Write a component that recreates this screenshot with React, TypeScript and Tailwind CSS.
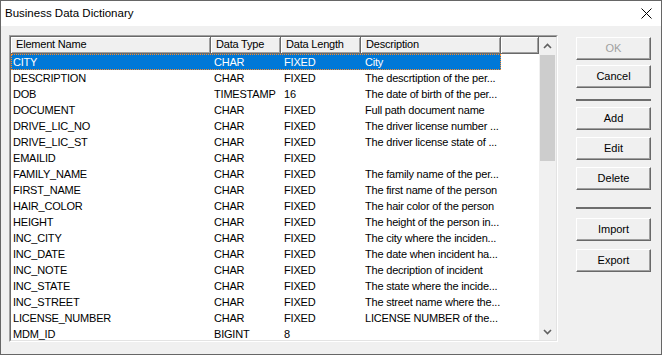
import React from 'react';

const rows = [
  ['CITY', 'CHAR', 'FIXED', 'City'],
  ['DESCRIPTION', 'CHAR', 'FIXED', 'The descrtiption of the per...'],
  ['DOB', 'TIMESTAMP', '16', 'The date of birth of the per...'],
  ['DOCUMENT', 'CHAR', 'FIXED', 'Full path document name'],
  ['DRIVE_LIC_NO', 'CHAR', 'FIXED', 'The driver license number ...'],
  ['DRIVE_LIC_ST', 'CHAR', 'FIXED', 'The driver license state of ...'],
  ['EMAILID', 'CHAR', 'FIXED', ''],
  ['FAMILY_NAME', 'CHAR', 'FIXED', 'The family name of the per...'],
  ['FIRST_NAME', 'CHAR', 'FIXED', 'The first name of the person'],
  ['HAIR_COLOR', 'CHAR', 'FIXED', 'The hair color of the person'],
  ['HEIGHT', 'CHAR', 'FIXED', 'The height of the person in...'],
  ['INC_CITY', 'CHAR', 'FIXED', 'The city where the inciden...'],
  ['INC_DATE', 'CHAR', 'FIXED', 'The date when incident ha...'],
  ['INC_NOTE', 'CHAR', 'FIXED', 'The decription of incident'],
  ['INC_STATE', 'CHAR', 'FIXED', 'The state where the incide...'],
  ['INC_STREET', 'CHAR', 'FIXED', 'The street name where the...'],
  ['LICENSE_NUMBER', 'CHAR', 'FIXED', 'LICENSE NUMBER of the...'],
  ['MDM_ID', 'BIGINT', '8', ''],
];

const widths = ['w-[200px]', 'w-[70px]', 'w-[80px]', 'w-[140px]'];
const headers = ['Element Name', 'Data Type', 'Data Length', 'Description'];

function HeaderCell({ label, width }: { label: string; width: string }) {
  return (
    <div
      className={`${width} h-full shrink-0 pl-[5px] leading-[15px] border-r border-b border-[#696969] shadow-[inset_1px_1px_0_#ffffff,inset_-1px_-1px_0_#a0a0a0] whitespace-nowrap overflow-hidden`}
    >
      {label}
    </div>
  );
}

function Chevron({ down }: { down?: boolean }) {
  return (
    <svg width="9" height="6" viewBox="0 0 9 6" className={down ? 'rotate-180' : ''}>
      <path d="M1 5 L4.5 1.5 L8 5" fill="none" stroke="#606060" strokeWidth="1.6" />
    </svg>
  );
}

function Btn({ label, disabled, className }: { label: string; disabled?: boolean; className?: string }) {
  return (
    <div
      className={`h-[23px] w-[75px] flex items-center justify-center bg-[#f0f0f0] border border-t-white border-l-white border-r-[#696969] border-b-[#696969] shadow-[inset_-1px_-1px_0_#a0a0a0] ${
        disabled ? 'text-[#a0a0a0]' : 'text-black'
      } ${className ?? ''}`}
    >
      {label}
    </div>
  );
}

export default function App() {
  return (
    <div
      className="w-[662px] h-[355px] flex flex-col border border-[#666666] bg-[#f0f0f0] text-[11px] text-black"
      style={{ fontFamily: '"Liberation Sans", Arial, sans-serif' }}
    >
      <div className="h-[25px] shrink-0 bg-white flex items-center justify-between pl-[4px] pr-[9px]">
        <span className="text-[11.5px]">Business Data Dictionary</span>
        <svg width="11" height="11" viewBox="0 0 11 11">
          <path d="M0.5 0.5 L10.5 10.5 M10.5 0.5 L0.5 10.5" stroke="#000" strokeWidth="1" />
        </svg>
      </div>

      <div className="flex-1 flex pl-[8px] pt-[9px]">
        <div className="w-[549px] h-[307px] shrink-0 border border-t-[#a0a0a0] border-l-[#a0a0a0] border-r-white border-b-white">
          <div className="w-full h-full flex border border-t-[#696969] border-l-[#696969] border-r-[#e3e3e3] border-b-[#e3e3e3] bg-white tracking-[-0.2px]">
            <div className="flex-1 flex flex-col overflow-hidden">
              <div className="h-[17px] shrink-0 flex bg-[#f0f0f0]">
                {headers.map((h, i) => (
                  <HeaderCell key={h} label={h} width={widths[i]} />
                ))}
                <HeaderCell label="" width="w-[38px]" />
              </div>
              {rows.map((r, ri) => (
                <div
                  key={r[0]}
                  className={`h-[16px] shrink-0 w-[490px] flex leading-[14px] ${
                    ri === 0 ? 'bg-[#0078d7] text-white border border-dotted border-[#ff8c28]' : 'border border-transparent'
                  }`}
                >
                  {r.map((c, ci) => (
                    <div
                      key={ci}
                      className={`${widths[ci]} shrink-0 whitespace-nowrap overflow-hidden ${ci === 0 ? 'pl-[1px] w-[199px]' : ci === 3 ? 'pl-[3px]' : 'pl-[2px]'}`}
                    >
                      {c}
                    </div>
                  ))}
                </div>
              ))}
            </div>
            <div className="w-[17px] shrink-0 flex flex-col bg-[#f0f0f0]">
              <div className="h-[17px] flex items-center justify-center">
                <Chevron />
              </div>
              <div className="flex-1 pt-[1px] px-[1px]">
                <div className="h-[106px] bg-[#cdcdcd]" />
              </div>
              <div className="h-[17px] flex items-center justify-center">
                <Chevron down />
              </div>
            </div>
          </div>
        </div>

        <div className="flex flex-col ml-[18px]">
          <Btn label="OK" disabled className="mt-[2px]" />
          <Btn label="Cancel" className="mt-[5px]" />
          <div className="mt-[11px] h-[2px] w-[75px] bg-[#6d6d6d]" />
          <Btn label="Add" className="mt-[6px]" />
          <Btn label="Edit" className="mt-[7px]" />
          <Btn label="Delete" className="mt-[7px]" />
          <div className="mt-[17px] h-[2px] w-[75px] bg-[#6d6d6d]" />
          <Btn label="Import" className="mt-[9px]" />
          <Btn label="Export" className="mt-[8px]" />
        </div>
      </div>
    </div>
  );
}
